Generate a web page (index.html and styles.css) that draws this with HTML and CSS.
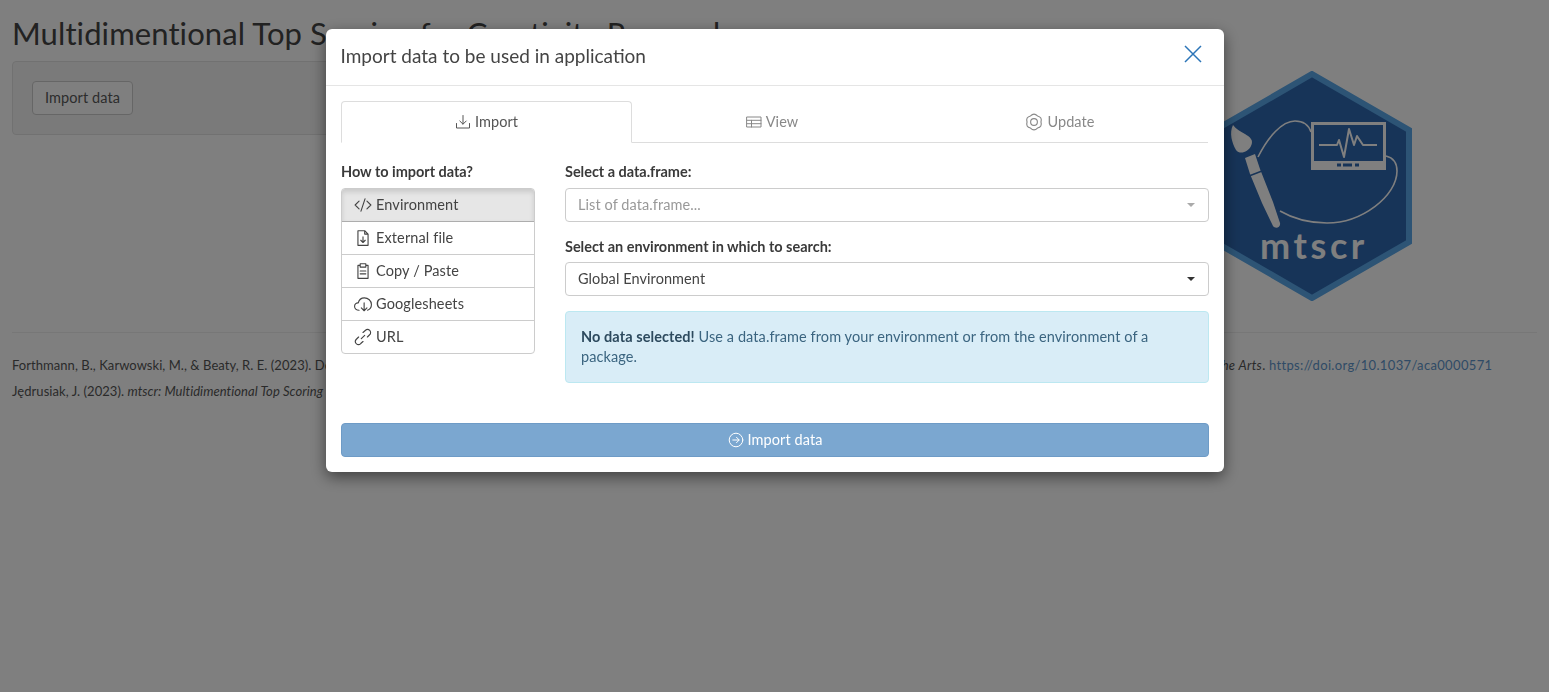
FILE: index.html
```html
<!DOCTYPE html>
<html lang="en">
<head>
<meta charset="utf-8">
<title>mtscr</title>
<link rel="stylesheet" href="styles.css">
</head>
<body>
<div class="page">
  <h2 class="page-title">Multidimentional Top Scoring for Creativity Research</h2>
  <div class="main-row">
    <div class="well"><button class="btn-default">Import data</button></div>
    <svg class="logo" viewBox="0 0 200 230" width="200" height="230" aria-label="mtscr logo">
      <polygon class="hex" points="100,3 197,59 197,171 100,227 3,171 3,59"/>
      <path class="ln" d="M46 86C56 66 70 50 83 50C92 50 97 55 99 61"/>
      <path class="ln" d="M174 85C182 87 185 93 185 100C185 125 150 152 115 152C95 152 80 147 68 140"/>
      <path class="wh" fill-rule="evenodd" d="M99 51H174V99H99ZM102 54V90H171V54Z"/>
      <path class="pulse" d="M107 74H125L127 69L132 86L137 58L142 74L145 65L151 74H165"/>
      <path class="dk" d="M125 92.500h4v3h-4ZM131 92.500h9v3h-9ZM143 92.500h4v3h-4Z"/>
      <path class="wh" d="M21 54C17 62 20 72 24 79C28 84 36 81 39 75C42 69 38 66 33 63C28 60 24 58 21 54Z"/>
      <path class="wh" d="M33 87L43 83L48 98L61 131L68 152C69 157 63 158 61 155L50 132L38 103Z"/>
      <path class="cut" d="M37 105L50 100"/>
      <text class="logo-text" x="48" y="188">mtscr</text>
    </svg>
  </div>
  <hr class="rule">
  <p class="cite cite-one">Forthmann, B., Karwowski, M., &amp; Beaty, R. E. (2023). <span class="cite-mid">Don’t throw the “bad” ideas away! Multidimensional top scoring increases reliability of divergent thinking tasks. <em>Psychology of Aesthetics, Creativity, and the Arts</em>.</span> <a href="#">https://doi.org/10.1037/aca0000571</a></p>
  <p class="cite">Jędrusiak, J. (2023). <em>mtscr: Multidimentional Top Scoring for Creativity Research</em>.</p>
</div>

<div class="backdrop"></div>

<div class="modal">
  <div class="modal-head">
    <h4 class="modal-title">Import data to be used in application</h4>
    <svg class="close" viewBox="0 0 18 18" width="18" height="18"><path d="M1 1L17 17M17 1L1 17"/></svg>
  </div>
  <div class="modal-body">
    <div class="tabs">
      <div class="tab tab-active">
        <svg class="ic" viewBox="0 0 16 16"><path d="M8 1.500V10M4.800 7L8 10.200L11.200 7M1.500 9.500V14H14.500V9.500"/></svg>Import
      </div>
      <div class="tab tab-view">
        <svg class="ic" viewBox="0 0 16 16"><path d="M1 3H15V13H1ZM1 6.300H15M1 9.700H15M5.500 6.300V13"/></svg>View
      </div>
      <div class="tab tab-update">
        <svg class="ic ic-large" viewBox="0 0 16 16"><circle cx="8" cy="8" r="3"/><path d="M4.900 2.630Q8 -.6 11.100 2.630Q15.500 3.600 14.200 8Q15.500 12.400 11.100 13.370Q8 16.600 4.900 13.370Q.5 12.400 1.800 8Q.5 3.600 4.900 2.630Z"/></svg>Update
      </div>
    </div>
    <div class="columns">
      <div class="side">
        <div class="label">How to import data?</div>
        <div class="list">
          <div class="item item-active"><svg class="ic ic-large" viewBox="0 0 16 16"><path d="M4.500 4.500L1 8L4.500 11.500M11.500 4.500L15 8L11.500 11.500M9.800 2.500L6.200 13.500"/></svg>Environment</div>
          <div class="item"><svg class="ic ic-large" viewBox="0 0 16 16"><path d="M3.500 1.500H9.500L12.500 4.500V14.500H3.500ZM9.500 1.500V4.500H12.500M8 7V12M6 10L8 12L10 10"/></svg>External file</div>
          <div class="item"><svg class="ic ic-large" viewBox="0 0 16 16"><path d="M5.500 3H3.500V14.500H12.500V3H10.500M5.500 1.500H10.500V4.500H5.500ZM5.500 8H10.500M5.500 10.500H10.500"/></svg>Copy / Paste</div>
          <div class="item"><svg class="ic ic-large" viewBox="0 0 16 16"><path d="M4.500 13.500C2 13.500 .5 11.800 .5 10C.5 8 2.200 6.800 3.800 7C4.500 4.200 6.700 2.500 9.200 2.500C12.500 2.500 15.500 5 15.500 8.500C15.500 11 13.800 13 12 13.500M9 7V14M6.500 11.500L9 14L11.500 11.500"/></svg>Googlesheets</div>
          <div class="item"><svg class="ic ic-large" viewBox="0 0 16 16"><path d="M6.500 9.500L9.500 6.500M8 4L10 2.200C11.200 1.100 13 1.200 14 2.200C15 3.300 15 5 13.900 6L11.900 8M8 12L6 13.800C4.900 14.900 3.100 14.900 2 13.900C1 12.800 1 11.100 2.100 10L4.100 8"/></svg>URL</div>
        </div>
      </div>
      <div class="form">
        <div class="label">Select a data.frame:</div>
        <div class="select select-muted">List of data.frame...<span class="caret caret-muted"></span></div>
        <div class="label label-second">Select an environment in which to search:</div>
        <div class="select">Global Environment<span class="caret"></span></div>
        <div class="alert"><strong class="alert-strong">No data selected!</strong> Use a data.frame from your environment or from the environment of a package.</div>
      </div>
    </div>
    <div class="action"><svg class="ic" viewBox="0 0 16 16"><circle cx="8" cy="8" r="6.800"/><path d="M4.800 8H11M8.500 5.300L11.200 8L8.500 10.700"/></svg>Import data</div>
  </div>
</div>
</body>
</html>
```
FILE: styles.css
```css
* { box-sizing: border-box; }
html, body { margin: 0; padding: 0; }
body {
  font-family: "Lato", "Liberation Sans", sans-serif;
  font-size: 14.5px;
  line-height: 20px;
  letter-spacing: .08px;
  color: #444;
  background: #fff;
  height: 692px;
  overflow: hidden;
}
.page { padding: 0 12px; }
.page-title {
  margin: 0;
  padding-top: 14px;
  height: 61px;
  font-size: 31px;
  line-height: 38px;
  font-weight: 400;
  letter-spacing: .1px;
  color: #444;
  white-space: nowrap;
}
.main-row { display: flex; align-items: flex-start; height: 271px; }
.well {
  width: 500px;
  height: 74px;
  padding: 19px;
  background: #f5f5f5;
  border: 1px solid #e3e3e3;
  border-radius: 4px;
}
.btn-default {
  display: block;
  height: 34px;
  width: 101px;
  padding: 0;
  font: inherit;
  letter-spacing: inherit;
  color: #5a5a5a;
  background: #fff;
  border: 1px solid #ccc;
  border-radius: 4px;
}
.logo { margin: 10px 0 0 700px; flex: none; }
.hex { fill: #2e68b0; stroke: #5aa8ea; stroke-width: 6; }
.ln { fill: none; stroke: #fff; stroke-width: 1.600; }
.wh { fill: #fff; }
.dk { fill: #2e68b0; }
.pulse { fill: none; stroke: #fff; stroke-width: 2; stroke-linejoin: round; }
.cut { stroke: #2e68b0; stroke-width: 1.500; fill: none; }
.logo-text {
  fill: #fff;
  font-family: "Lato", sans-serif;
  font-weight: 700;
  font-size: 36px;
  letter-spacing: 3.600px;
}
.rule { margin: 0; border: 0; border-top: 1px solid #eee; }
.cite {
  margin: 0;
  font-size: 13px;
  line-height: 20px;
  letter-spacing: .05px;
  white-space: nowrap;
  color: #555;
}
.cite-one { margin: 22px 0 6px; }
.cite-mid { letter-spacing: .32px; }
.cite a { color: #6096cc; text-decoration: none; letter-spacing: .34px; }

.backdrop { position: fixed; inset: 0; background: #000; opacity: .5; }

.modal {
  position: fixed;
  left: 326px;
  top: 29px;
  width: 898px;
  height: 443px;
  background: #fff;
  border-radius: 6px;
  box-shadow: 0 5px 15px rgba(0,0,0,.5);
}
.modal-head {
  height: 57px;
  padding: 0 22px 0 14.500px;
  display: flex;
  align-items: center;
  justify-content: space-between;
  border-bottom: 1px solid #e5e5e5;
}
.modal-title { margin: -2px 0 0; font-size: 19px; font-weight: 400; color: #444; letter-spacing: 0; }
.close { fill: none; stroke: #2c75b8; stroke-width: 1.500; margin-top: -6px; }
.modal-body { padding: 15px 15px 0; }
.ic {
  width: 16px;
  height: 16px;
  margin-right: 4px;
  fill: none;
  stroke: currentColor;
  stroke-width: 1;
  flex: none;
  stroke-linejoin: round;
  stroke-linecap: round;
}
.ic-large { width: 18px; height: 18px; margin-right: 4px; }
.tabs { display: flex; width: 867px; height: 42px; border-bottom: 1px solid #ddd; }
.tab {
  display: flex;
  align-items: center;
  justify-content: center;
  color: #888;
}
.tab-active {
  color: #555;
  height: 42px;
  background: #fff;
  border: 1px solid #ddd;
  border-bottom-color: #fff;
  border-radius: 4px 4px 0 0;
  flex: 0 0 291px;
}
.tab-view { flex: 0 0 280px; }
.tab-update { flex: 0 0 296px; }
.columns { display: flex; margin-top: 19px; gap: 30px; }
.side { width: 194px; flex: none; }
.form { width: 644px; flex: none; }
.label { font-weight: 700; color: #3a3a3a; height: 26px; line-height: 20px; letter-spacing: -.03px; }
.label-second { margin-top: 15px; height: 25px; }
.list { border: 1px solid #ccc; border-radius: 4px; overflow: hidden; }
.item {
  height: 33px;
  display: flex;
  align-items: center;
  padding-left: 12px;
  letter-spacing: .12px;
  border-bottom: 1px solid #ccc;
}
.item:last-child { border-bottom: 0; height: 32px; }
.item-active { background: #e6e6e6; box-shadow: inset 0 3px 5px rgba(0,0,0,.125); border-bottom-color: #adadad; }
.select {
  height: 34px;
  padding: 0 12px;
  display: flex;
  align-items: center;
  justify-content: space-between;
  border: 1px solid #ccc;
  border-radius: 4px;
}
.select-muted { color: #999; }
.caret { width: 0; height: 0; border: 4px solid transparent; border-top-color: #333; border-bottom: 0; margin-right: 1px; }
.caret-muted { border-top-color: #aaa; }
.alert {
  margin-top: 15px;
  height: 72px;
  padding: 15px;
  color: #3b6580;
  background: #d9edf7;
  border: 1px solid #bce8f1;
  border-radius: 4px;
}
.alert-strong { color: #2d4a5e; }
.action {
  margin-top: 40px;
  width: 868px;
  height: 34px;
  display: flex;
  align-items: center;
  justify-content: center;
  color: #fff;
  background: #7ba7d0;
  border: 1px solid #6e9bc6;
  border-radius: 4px;
}
```
